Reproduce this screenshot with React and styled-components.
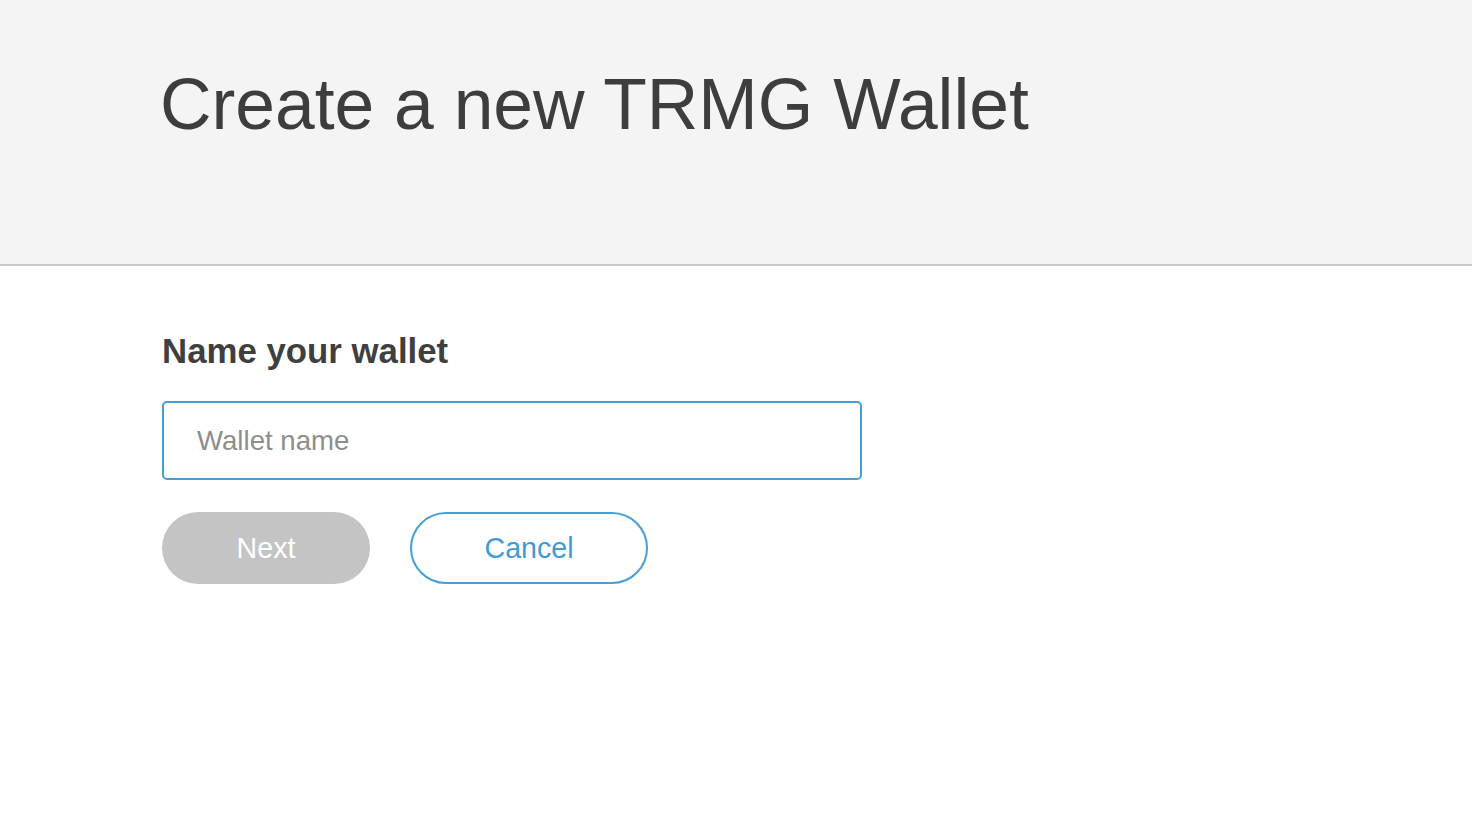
import styled, { createGlobalStyle } from "styled-components";

const GlobalStyle = createGlobalStyle`
  body {
    margin: 0;
    background: #ffffff;
    font-family: "Liberation Sans", Arial, sans-serif;
  }
`;

const Header = styled.header`
  height: 266px;
  background: #f4f4f4;
  border-bottom: 2px solid #c8c8c8;
  box-sizing: border-box;
  padding: 62px 0 0 160px;
`;

const Title = styled.h1`
  margin: 0;
  font-size: 71.4px;
  font-weight: 400;
  line-height: 84px;
  color: #3d3d3d;
`;

const Main = styled.main`
  padding: 64px 0 0 162px;
  width: 700px;
`;

const Label = styled.h2`
  margin: 0;
  font-size: 34.8px;
  font-weight: 600;
  line-height: 42px;
  color: #3f3f3f;
`;

const Input = styled.input`
  display: block;
  box-sizing: border-box;
  width: 700px;
  height: 79px;
  margin-top: 29px;
  padding: 0 33px;
  border: 2px solid #449fd6;
  border-radius: 5px;
  font-family: inherit;
  font-size: 27.6px;
  color: #3d3d3d;
  outline: none;
  &::placeholder {
    color: #8e8e8e;
  }
`;

const Actions = styled.div`
  display: flex;
  gap: 40px;
  margin-top: 32px;
`;

const Button = styled.button`
  box-sizing: border-box;
  width: ${(p) => p.$width}px;
  height: 72px;
  border-radius: 36px;
  font-family: inherit;
  font-size: 28.6px;
  cursor: pointer;
  background: ${(p) => (p.$outline ? "#ffffff" : "#c4c4c4")};
  color: ${(p) => (p.$outline ? "#3f9bd5" : "#ffffff")};
  border: ${(p) => (p.$outline ? "2px solid #449fd6" : "none")};
`;

export default function App() {
  return (
    <>
      <GlobalStyle />
      <Header>
        <Title>Create a new TRMG Wallet</Title>
      </Header>
      <Main>
        <Label>Name your wallet</Label>
        <Input placeholder="Wallet name" />
        <Actions>
          <Button $width={208} disabled>
            Next
          </Button>
          <Button $width={238} $outline>
            Cancel
          </Button>
        </Actions>
      </Main>
    </>
  );
}
